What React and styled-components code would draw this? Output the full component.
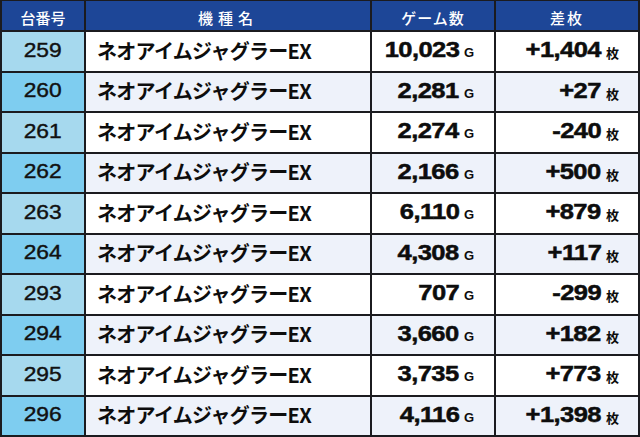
import React from "react";
import styled, { createGlobalStyle } from "styled-components";

const Global = createGlobalStyle`
  html, body { margin: 0; padding: 0; background: #ffffff; }
  body { font-family: "Noto Sans CJK JP", "Noto Sans", sans-serif; }
`;

const rows = [
  ["259", "10,023", "+1,404"],
  ["260", "2,281", "+27"],
  ["261", "2,274", "-240"],
  ["262", "2,166", "+500"],
  ["263", "6,110", "+879"],
  ["264", "4,308", "+117"],
  ["293", "707", "-299"],
  ["294", "3,660", "+182"],
  ["295", "3,735", "+773"],
  ["296", "4,116", "+1,398"],
];

const Table = styled.div`
  width: 640px;
  height: 437px;
  box-sizing: border-box;
  display: grid;
  grid-template-columns: 82px 284px 122px 142px;
  grid-template-rows: 29px repeat(10, 1fr);
  gap: 2px;
  padding: 1px 2px 2px 2px;
  background: #1b1b1f;
`;

const HeadCell = styled.div`
  background: #1d4697;
  color: #ffffff;
  font-family: "Noto Sans CJK JP", sans-serif;
  font-weight: 500;
  font-size: 15px;
  letter-spacing: ${(p) => p.$spacing || "0px"};
  display: flex;
  align-items: center;
  justify-content: center;
  padding-top: 3px;
  box-sizing: border-box;
`;

const NumCell = styled.div`
  background: ${(p) => (p.$alt ? "#7ecdf0" : "#a6d9ee")};
  color: #111;
  display: flex;
  align-items: center;
  justify-content: center;
  padding-bottom: 2px;
  box-sizing: border-box;
`;

const NoText = styled.span`
  display: inline-block;
  font-family: "Liberation Sans", Arial, sans-serif;
  font-size: 20px;
  -webkit-text-stroke: 0.4px #111;
  transform: scaleX(1.14);
`;

const NameCell = styled.div`
  background: ${(p) => (p.$alt ? "#eef2fa" : "#ffffff")};
  color: #0d0d0d;
  font-family: "Noto Sans CJK JP", sans-serif;
  font-weight: 700;
  font-size: 20px;
  letter-spacing: -0.7px;
  display: flex;
  align-items: center;
  padding: 0 0 2px 11px;
  box-sizing: border-box;
`;

const ValueCell = styled.div`
  background: ${(p) => (p.$alt ? "#eef2fa" : "#ffffff")};
  color: #0d0d0d;
  display: flex;
  align-items: center;
  justify-content: flex-end;
  padding: 0 ${(p) => p.$pad || "20px"} 2px 0;
  box-sizing: border-box;
  line-height: 1;
`;

const BigNum = styled.span`
  display: inline-block;
  font-family: "Liberation Sans", Arial, sans-serif;
  font-weight: 700;
  font-size: 22px;
  letter-spacing: -0.5px;
  -webkit-text-stroke: 0.5px #0d0d0d;
  transform: scaleX(1.16);
  transform-origin: right center;
`;

const Unit = styled.span`
  font-family: ${(p) =>
    p.$cjk ? `"Noto Sans CJK JP", sans-serif` : `"Liberation Sans", sans-serif`};
  font-weight: 700;
  font-size: 13px;
  margin-left: 5px;
  margin-top: 5px;
`;

export default function App() {
  return (
    <>
      <Global />
      <Table>
        <HeadCell>台番号</HeadCell>
        <HeadCell $spacing="5px">機種名</HeadCell>
        <HeadCell $spacing="1px">ゲーム数</HeadCell>
        <HeadCell $spacing="2px">差枚</HeadCell>
        {rows.map(([no, games, diff], i) => {
          const alt = i % 2 === 1;
          return (
            <React.Fragment key={no}>
              <NumCell $alt={alt}>
                <NoText>{no}</NoText>
              </NumCell>
              <NameCell $alt={alt}>ネオアイムジャグラーEX</NameCell>
              <ValueCell $alt={alt} $pad="20px">
                <BigNum>{games}</BigNum>
                <Unit>G</Unit>
              </ValueCell>
              <ValueCell $alt={alt} $pad="19px">
                <BigNum>{diff}</BigNum>
                <Unit $cjk>枚</Unit>
              </ValueCell>
            </React.Fragment>
          );
        })}
      </Table>
    </>
  );
}
